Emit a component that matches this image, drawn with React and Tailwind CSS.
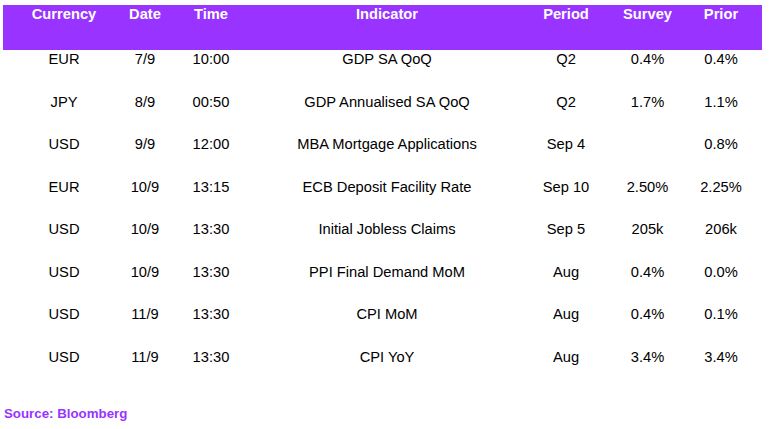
import React from "react";

const rows = [
	["EUR", "7/9", "10:00", "GDP SA QoQ", "Q2", "0.4%", "0.4%"],
	["JPY", "8/9", "00:50", "GDP Annualised SA QoQ", "Q2", "1.7%", "1.1%"],
	["USD", "9/9", "12:00", "MBA Mortgage Applications", "Sep 4", "", "0.8%"],
	["EUR", "10/9", "13:15", "ECB Deposit Facility Rate", "Sep 10", "2.50%", "2.25%"],
	["USD", "10/9", "13:30", "Initial Jobless Claims", "Sep 5", "205k", "206k"],
	["USD", "10/9", "13:30", "PPI Final Demand MoM", "Aug", "0.4%", "0.0%"],
	["USD", "11/9", "13:30", "CPI MoM", "Aug", "0.4%", "0.1%"],
	["USD", "11/9", "13:30", "CPI YoY", "Aug", "3.4%", "3.4%"],
];

const headers = ["Currency", "Date", "Time", "Indicator", "Period", "Survey", "Prior"];

const cols = "grid w-[759px] grid-cols-[122px_40px_92px_260px_98px_65px_82px]";

export default function App() {
	return (
		<div
			className="w-[770px] h-[429px] bg-white text-[14.7px] leading-[16px] text-black"
			style={{ fontFamily: '"Liberation Sans", Arial, sans-serif' }}
		>
			<div className="pt-[5px] pl-[3px]">
				<div className={`${cols} h-[45px] bg-[#9933ff] text-white font-bold pt-[1px]`}>
					{headers.map((h) => (
						<div key={h} className="text-center">
							{h}
						</div>
					))}
				</div>
				{rows.map((r, i) => (
					<div key={i} className={`${cols} h-[42.5px] pt-[1px]`}>
						{r.map((c, j) => (
							<div key={j} className="text-center">
								{c}
							</div>
						))}
					</div>
				))}
			</div>
			<div className="mt-[16px] pl-[4px] text-[13.3px] font-bold text-[#9933ff]">
				Source: Bloomberg
			</div>
		</div>
	);
}
